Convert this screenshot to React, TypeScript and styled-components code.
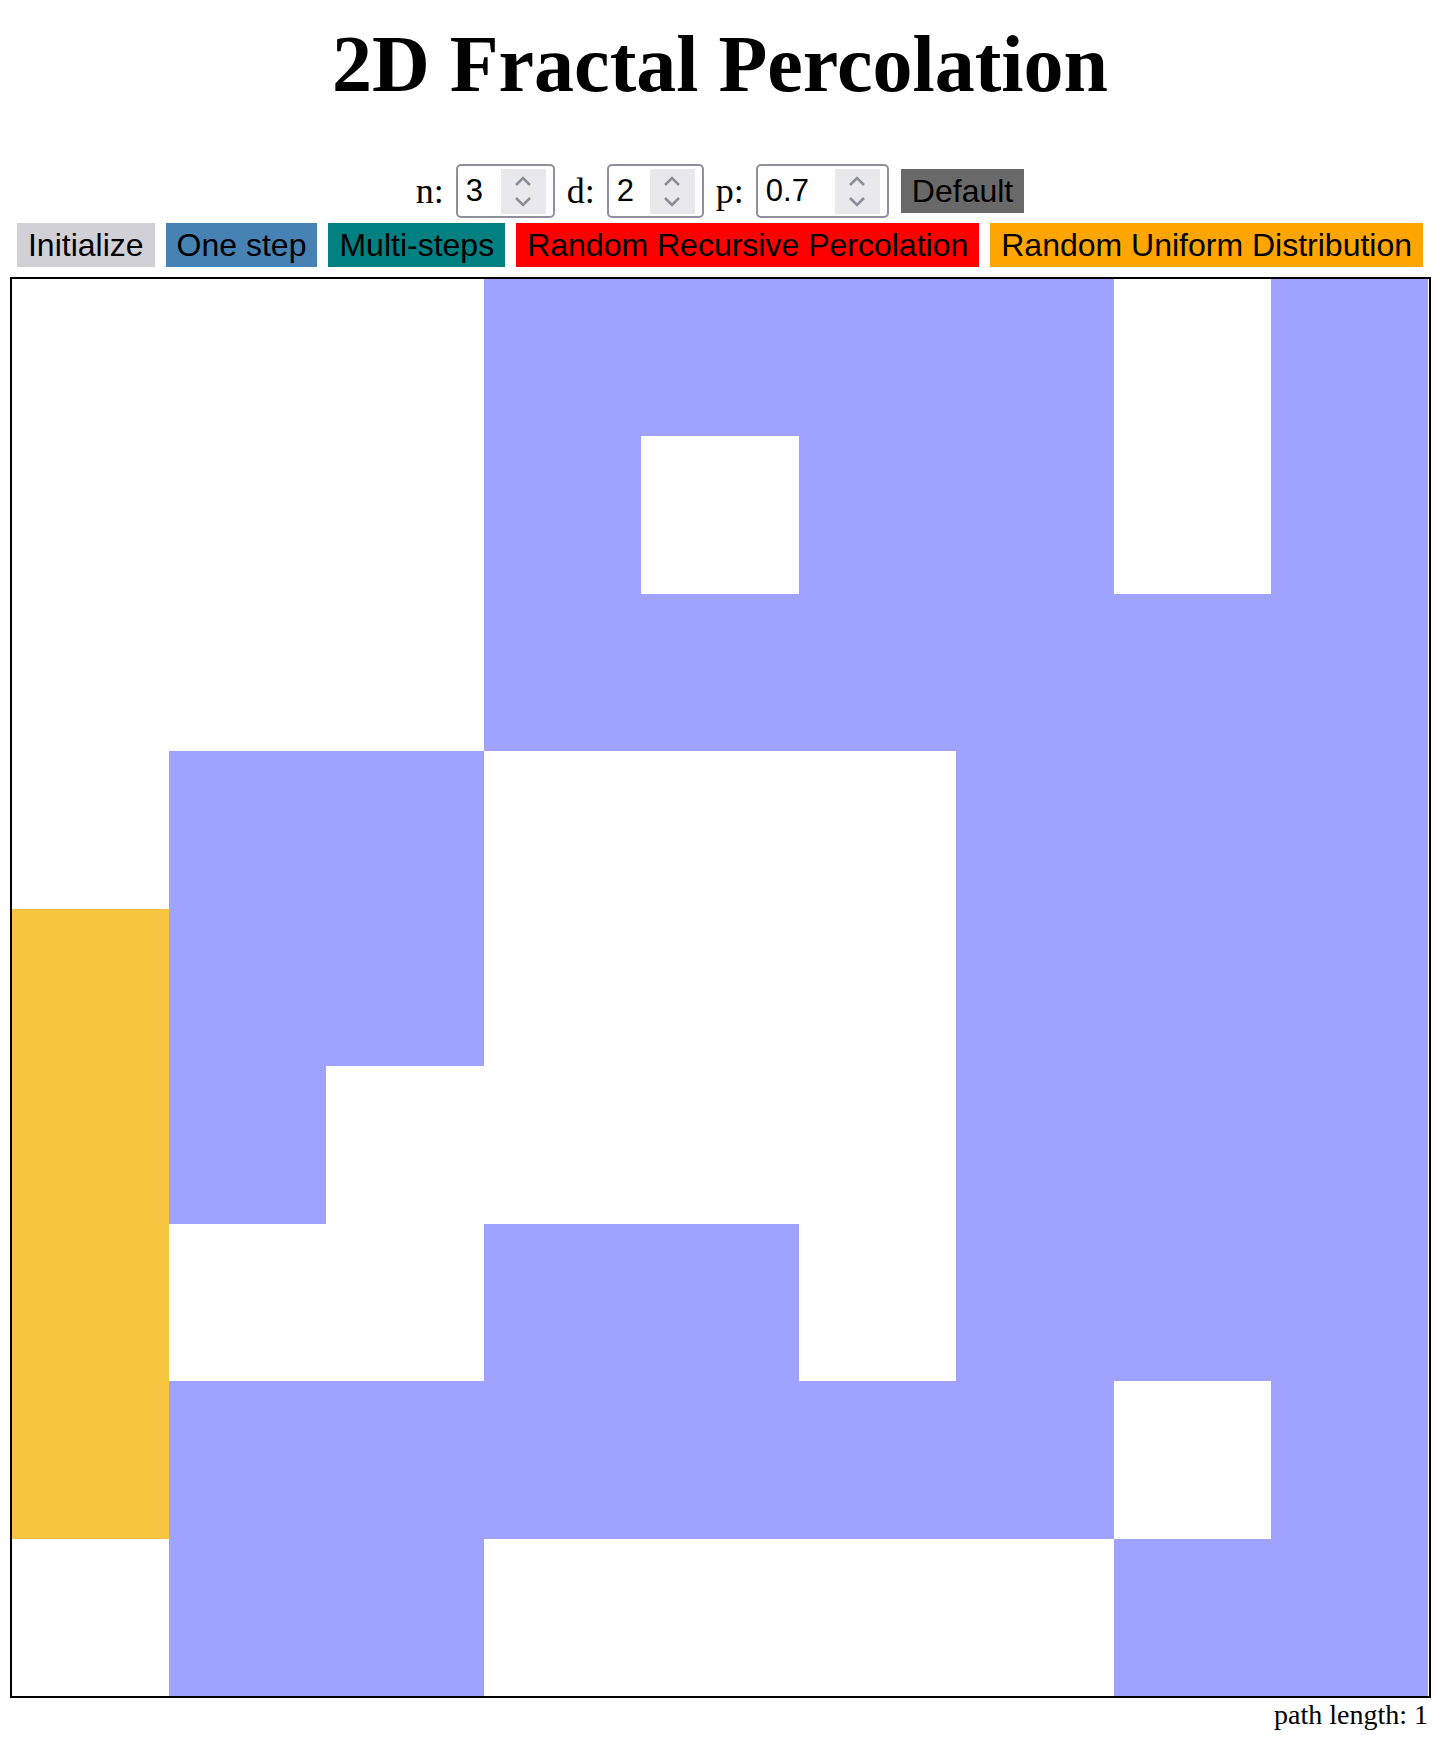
import styled, { createGlobalStyle } from 'styled-components'

const GlobalStyle = createGlobalStyle`
  body {
    margin: 0;
    background: #ffffff;
    font-family: "Liberation Serif", "Times New Roman", serif;
    color: #000000;
  }
`

const Page = styled.div`
  padding: 0 8px;
  display: flex;
  flex-direction: column;
  align-items: stretch;
`

const Title = styled.h1`
  margin: 0;
  padding-top: 24px;
  height: 80px;
  line-height: 80px;
  font-size: 80px;
  font-weight: bold;
  text-align: center;
`

const Controls = styled.div`
  margin-top: 60px;
  height: 54px;
  display: flex;
  justify-content: center;
  align-items: center;
  gap: 12px;
`

const Label = styled.span`
  font-size: 36px;
  line-height: 40px;
`

const NumberBox = styled.div<{ $width: number }>`
  box-sizing: border-box;
  width: ${(p) => p.$width}px;
  height: 54px;
  border: 2px solid #8f8f9d;
  border-radius: 5px;
  display: flex;
  align-items: center;
  justify-content: space-between;
  padding: 0 7px 0 8px;
  background: #ffffff;
`

const NumberValue = styled.span`
  font-family: "Liberation Sans", Arial, sans-serif;
  font-size: 31px;
  line-height: 36px;
`

const Spinner = styled.span`
  width: 45px;
  height: 45px;
  background: #e8e8ed;
  display: flex;
  flex-direction: column;
  align-items: center;
  justify-content: center;
  gap: 11px;
`

const ButtonRow = styled.div`
  margin-top: 5px;
  display: flex;
  justify-content: center;
  gap: 11px;
`

const ActionButton = styled.button<{ $bg: string }>`
  height: 44px;
  padding: 0 11px;
  border: none;
  border-radius: 0;
  background: ${(p) => p.$bg};
  color: #000000;
  font-family: "Liberation Sans", Arial, sans-serif;
  font-size: 32px;
  line-height: 44px;
  white-space: nowrap;
  cursor: pointer;
`

const Board = styled.div`
  margin: 10px auto 0;
  width: 1417px;
  height: 1417px;
  border: 2px solid #000000;
  display: grid;
  grid-template-columns: repeat(9, 1fr);
  grid-template-rows: repeat(9, 1fr);
`

const Cell = styled.div<{ $kind: string }>`
  background: ${(p) =>
    p.$kind === 'P' ? '#a0a2ff' : p.$kind === 'Y' ? '#f8c540' : '#ffffff'};
`

const PathLength = styled.div`
  margin-top: 1px;
  padding-right: 4px;
  text-align: right;
  font-size: 28px;
  line-height: 32px;
`

const rows = [
  '...PPPP.P',
  '...P.PP.P',
  '...PPPPPP',
  '.PP...PPP',
  'YPP...PPP',
  'YP....PPP',
  'Y..PP.PPP',
  'YPPPPPP.P',
  '.PP....PP',
]

const Chevron = ({ up }: { up?: boolean }) => (
  <svg width="18" height="10" viewBox="0 0 18 10">
    <path
      d={up ? 'M2 9 L9 2 L16 9' : 'M2 1 L9 8 L16 1'}
      fill="none"
      stroke="#8e8e9a"
      strokeWidth="2.6"
    />
  </svg>
)

const NumberInput = ({ value, width }: { value: string; width: number }) => (
  <NumberBox $width={width}>
    <NumberValue>{value}</NumberValue>
    <Spinner>
      <Chevron up />
      <Chevron />
    </Spinner>
  </NumberBox>
)

const App = () => {
  return (
    <Page>
      <GlobalStyle />
      <Title>2D Fractal Percolation</Title>
      <Controls>
        <Label>n:</Label>
        <NumberInput value="3" width={99} />
        <Label>d:</Label>
        <NumberInput value="2" width={97} />
        <Label>p:</Label>
        <NumberInput value="0.7" width={133} />
        <ActionButton $bg="#696969">Default</ActionButton>
      </Controls>
      <ButtonRow>
        <ActionButton $bg="#d0d0d6">Initialize</ActionButton>
        <ActionButton $bg="#4682b4">One step</ActionButton>
        <ActionButton $bg="#008080">Multi-steps</ActionButton>
        <ActionButton $bg="#ff0000">Random Recursive Percolation</ActionButton>
        <ActionButton $bg="#ffa500">Random Uniform Distribution</ActionButton>
      </ButtonRow>
      <Board>
        {rows.map((row, r) =>
          row.split('').map((kind, c) => <Cell key={`${r}-${c}`} $kind={kind} />)
        )}
      </Board>
      <PathLength>path length: 1</PathLength>
    </Page>
  )
}

export default App
